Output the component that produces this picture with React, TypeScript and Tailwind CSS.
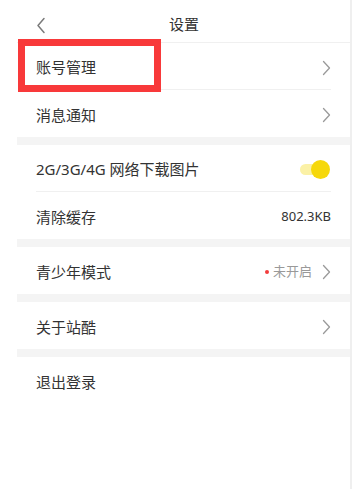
import React from "react";

const font = { fontFamily: '"Noto Sans", "Noto Sans CJK SC", sans-serif' };

function Chevron() {
  return (
    <svg width="9" height="16" viewBox="0 0 9 16" className="shrink-0">
      <path d="M1.5 1.5 L7.5 8 L1.5 14.5" fill="none" stroke="#9a9a9a" strokeWidth="1.3" strokeLinecap="round" strokeLinejoin="round" />
    </svg>
  );
}

function Row({ label, right, border = false }: { label: string; right?: React.ReactNode; border?: boolean }) {
  return (
    <div className="px-[19px]">
      <div className={`h-[47px] pt-[3px] flex items-center justify-between ${border ? "border-b border-[#f0f0f0]" : ""}`}>
        <span className="text-[15px] text-[#333333] leading-none">{label}</span>
        {right}
      </div>
    </div>
  );
}

function Band() {
  return <div className="h-[8px] bg-[#f4f4f4]" />;
}

export default function App() {
  return (
    <div className="w-[357px] h-[489px] bg-white relative overflow-hidden" style={font}>
      <div className="ml-[17px] w-[335px] h-full border-r-2 border-[#efefef] bg-white">
        <div className="h-[43px] relative flex items-center justify-center border-b border-[#f0f0f0]">
          <div className="absolute left-[19px] top-[17px]">
            <svg width="10" height="17" viewBox="0 0 10 17">
              <path d="M8 1.5 L2 8.5 L8 15.5" fill="none" stroke="#7a7a7a" strokeWidth="1.5" strokeLinecap="round" strokeLinejoin="round" />
            </svg>
          </div>
          <span className="text-[15px] text-[#333333] ml-[1px] mt-[7px]">设置</span>
        </div>
        <Row label="账号管理" right={<Chevron />} border />
        <Row label="消息通知" right={<Chevron />} />
        <Band />
        <Row
          label="2G/3G/4G 网络下载图片"
          border
          right={
            <div className="relative w-[30px] h-[20px] flex items-center mr-[1px]">
              <div className="absolute left-0 right-[6px] h-[11px] rounded-full bg-[#fbf1a6]" />
              <div className="absolute right-0 w-[19px] h-[19px] rounded-full bg-[#f6d80a]" />
            </div>
          }
        />
        <Row label="清除缓存" right={<span className="text-[13px] text-[#333333]">802.3KB</span>} />
        <Band />
        <Row
          label="青少年模式"
          right={
            <div className="flex items-center">
              <span className="w-[4px] h-[4px] rounded-full bg-[#f23b3b] mr-[4px]" />
              <span className="text-[13px] text-[#999999] mr-[10px]">未开启</span>
              <Chevron />
            </div>
          }
        />
        <Band />
        <Row label="关于站酷" right={<Chevron />} />
        <Band />
        <Row label="退出登录" />
      </div>
      <div className="absolute left-[18px] top-[39px] w-[143px] h-[53px] border-[7px] border-[#f8393a]" />
    </div>
  );
}
